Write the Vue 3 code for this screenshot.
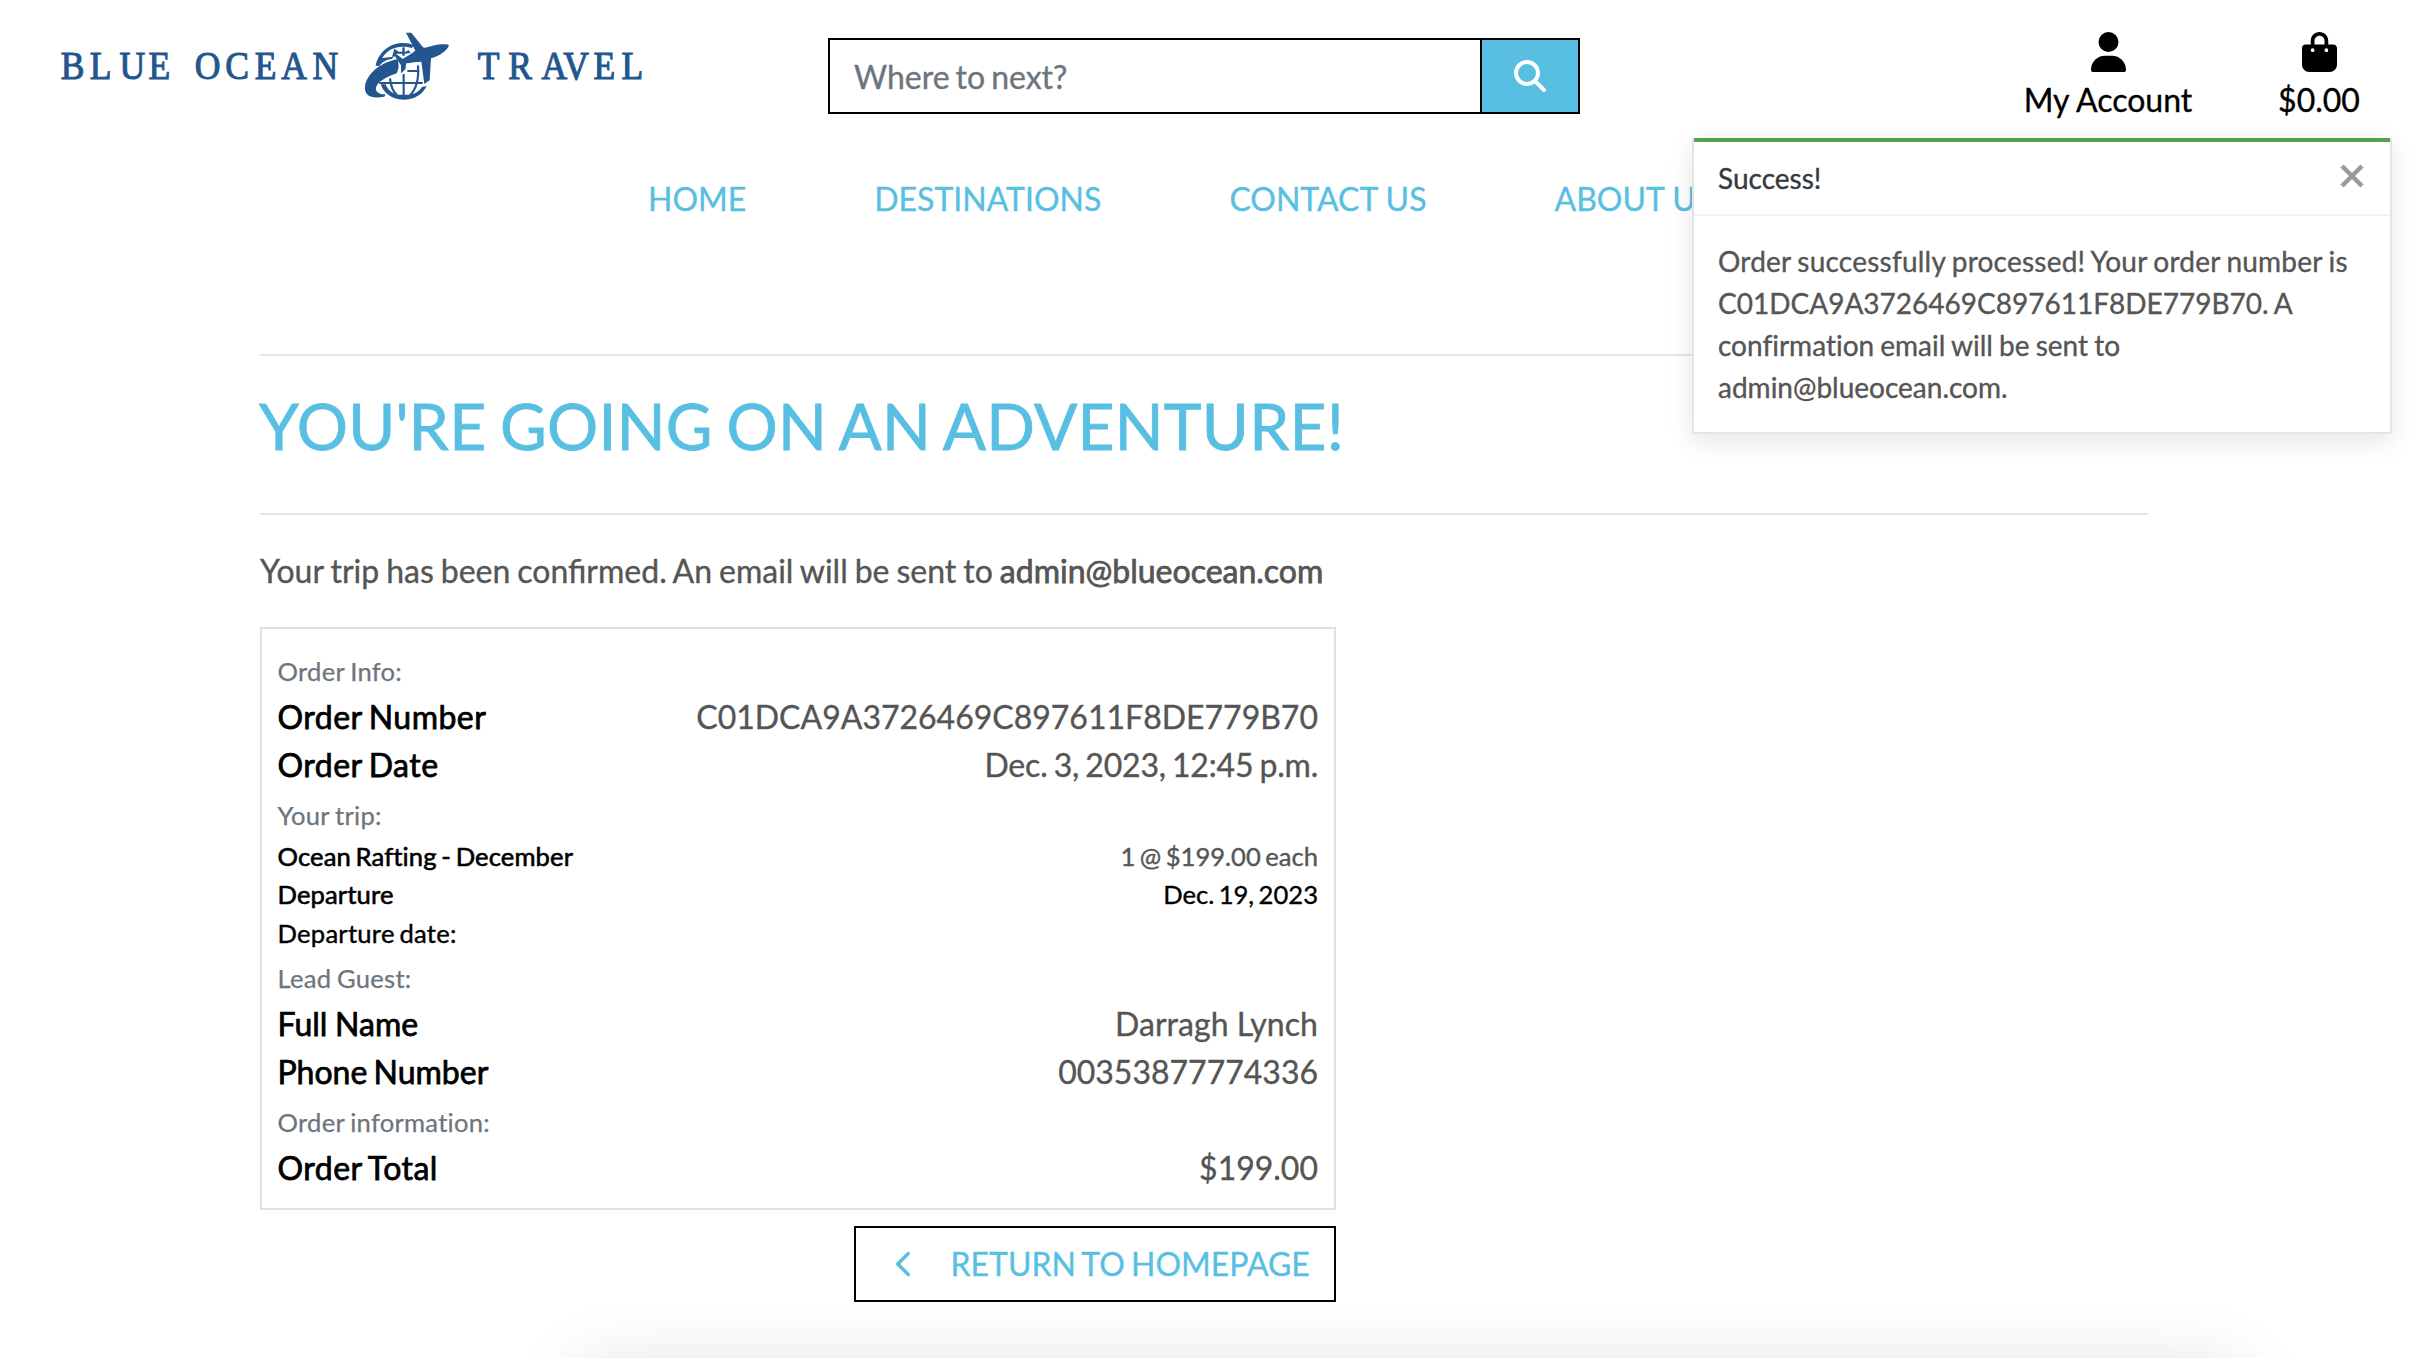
<script setup>
const nav = ['Home', 'Destinations', 'Contact Us', 'About Us']

const rows = [
  { kind: 'caption', label: 'Order Info:' },
  { kind: 'main wide', label: 'Order Number', value: 'C01DCA9A3726469C897611F8DE779B70' },
  { kind: 'main wide date', label: 'Order Date', value: 'Dec. 3, 2023, 12:45 p.m.' },
  { kind: 'caption', label: 'Your trip:' },
  { kind: 'small', label: 'Ocean Rafting - December', value: '1 @ $199.00 each' },
  { kind: 'small', label: 'Departure', value: 'Dec. 19, 2023', dark: true },
  { kind: 'small', label: 'Departure date:', plain: true },
  { kind: 'caption', label: 'Lead Guest:' },
  { kind: 'main name', label: 'Full Name', value: 'Darragh Lynch' },
  { kind: 'main', label: 'Phone Number', value: '00353877774336' },
  { kind: 'caption', label: 'Order information:' },
  { kind: 'main wide', label: 'Order Total', value: '$199.00' },
]

// Left edge of every wordmark letter
const letters = [
  ['B', 60.8], ['L', 89.8], ['U', 119.6], ['E', 148.6],
  ['O', 194.8], ['C', 225.4], ['E', 254.7], ['A', 281.2], ['N', 312.6],
  ['T', 477.8], ['R', 508.2], ['A', 541.4], ['V', 563.3], ['E', 593.5], ['L', 621.6],
]
const squeeze = 0.9
const wordmark = letters.map((l) => l[0]).join('')
const wordmarkX = letters.map((l) => (l[1] / squeeze).toFixed(1)).join(' ')
</script>

<template>
  <div class="page">
    <header class="top">
      <svg class="logo" viewBox="40 10 640 110">
        <text class="wordmark" y="79.3" :x="wordmarkX" transform="scale(0.9 1)">{{ wordmark }}</text>
        <g transform="translate(350 20) scale(0.33333)" fill="#23568f">
          <path d="M77 137C84 99 118 68 160 69C172 69 182 71 190 76L186 84C176 81 168 80 158 80C128 80 107 95 97 114L130 110L126 117C108 118 98 126 88 138Z" />
          <path d="M133 86L146 95L157 95V82H164V96L176 91L182 99L164 101V107H157V101L141 101L137 109L126 111Z" />
          <path d="M143 118C92 126 50 162 45 199C42 229 66 237 103 230L107 223C84 224 70 211 82 194C96 177 119 168 140 160C146 148 148 136 143 118Z" />
          <path d="M168 38H184L219 82C228 86 242 76 262 74C278 72 294 72 297 76C292 92 270 108 243 115L239 181L223 192L214 125C198 125 184 128 169 130L166 148L153 160V136L134 107L142 104L158 117C172 108 188 99 196 92Z" />
          <path d="M92 193C102 222 128 239 160 239C192 239 218 224 230 198L216 201C206 216 192 223 176 224H144C126 220 113 210 107 193Z" />
          <g fill="none" stroke="#23568f" stroke-width="6.5">
            <path d="M88 189H218M172 153H208M161 162V226M120 175C122 198 129 214 141 226M204 136C207 176 198 208 180 226" />
          </g>
        </g>
      </svg>

      <form class="search" @submit.prevent>
        <input type="text" placeholder="Where to next?" />
        <button type="submit" aria-label="Search">
          <svg viewBox="0 0 512 512" width="32" height="32"><path fill="#fff" d="M416 208c0 45.900-14.900 88.300-40 122.700L502.600 457.400c12.500 12.500 12.500 32.800 0 45.300s-32.800 12.500-45.300 0L330.700 376c-34.400 25.200-76.800 40-122.700 40C93.100 416 0 322.900 0 208S93.100 0 208 0S416 93.100 416 208zM208 352a144 144 0 1 0 0-288 144 144 0 1 0 0 288z" /></svg>
        </button>
      </form>

      <div class="account">
        <a class="tool user">
          <svg viewBox="0 0 448 512" width="35" height="40"><path d="M224 256A128 128 0 1 0 224 0a128 128 0 1 0 0 256zm-45.700 48C79.800 304 0 383.800 0 482.300C0 498.700 13.300 512 29.700 512H418.300c16.400 0 29.700-13.300 29.700-29.700C448 383.800 368.200 304 269.700 304H178.300z" /></svg>
          <span>My Account</span>
        </a>
        <a class="tool bag">
          <svg viewBox="0 0 448 512" width="35" height="40"><path d="M160 112c0-35.300 28.700-64 64-64s64 28.700 64 64v48H160V112zm-48 48H48c-26.500 0-48 21.500-48 48V416c0 53 43 96 96 96H352c53 0 96-43 96-96V208c0-26.500-21.500-48-48-48H336V112C336 50.100 285.900 0 224 0S112 50.100 112 112v48zm24 48a24 24 0 1 1 0 48 24 24 0 1 1 0-48zm152 24a24 24 0 1 1 48 0 24 24 0 1 1-48 0z" /></svg>
          <span>$0.00</span>
        </a>
      </div>
    </header>

    <nav class="menu">
      <a v-for="item in nav" :key="item">{{ item }}</a>
    </nav>

    <main class="content">
      <hr />
      <h2>You're going on an adventure!</h2>
      <hr />
      <p class="lead">Your trip has been confirmed. An email will be sent to <strong>admin@blueocean.com</strong></p>

      <section class="order">
        <div v-for="row in rows" :key="row.label" class="row" :class="row.kind">
          <span class="label" :class="{ plain: row.plain }">{{ row.label }}</span>
          <span v-if="row.value" class="value" :class="{ dark: row.dark }">{{ row.value }}</span>
        </div>
      </section>

      <a class="home">
        <svg viewBox="0 0 320 512" width="17.5" height="28"><path fill="currentColor" d="M9.400 233.400c-12.500 12.500-12.500 32.800 0 45.300l192 192c12.500 12.500 32.800 12.500 45.300 0s12.500-32.800 0-45.300L77.300 256 246.600 86.600c12.500-12.500 12.500-32.800 0-45.300s-32.800-12.500-45.300 0l-192 192z" /></svg>
        <span>Return to homepage</span>
      </a>
    </main>

    <aside class="toast">
      <div class="toast-head">
        <span>Success!</span>
        <svg width="24" height="24" viewBox="0 0 24 24"><path d="M2 2L22 22M22 2L2 22" stroke="#999b9d" stroke-width="4.5" /></svg>
      </div>
      <div class="toast-body">
        <p class="first">Order successfully processed! Your order number is</p>
        <p>C01DCA9A3726469C897611F8DE779B70. A confirmation email will be sent to admin@blueocean.com.</p>
      </div>
    </aside>

    <div class="footer-shade"></div>
  </div>
</template>

<style>
body {
  margin: 0;
  background: #fff;
}
</style>

<style scoped>
.page {
  position: relative;
  width: 2414px;
  height: 1358px;
  overflow: hidden;
  box-sizing: border-box;
  font-family: Lato, "Liberation Sans", sans-serif;
  font-size: 32px;
  line-height: 48px;
  color: #555;
  -webkit-text-stroke: 0.35px;
}

.page * {
  box-sizing: border-box;
}

.page svg {
  display: block;
}

.top {
  display: flex;
  align-items: flex-start;
  height: 174.5px;
  padding-left: 40px;
}

.logo {
  width: 640px;
  height: 110px;
  margin-top: 10px;
}

.wordmark {
  font-family: "Liberation Serif", serif;
  font-size: 39.5px;
  fill: #23568f;
  stroke: #23568f;
  stroke-width: 1.1px;
}

.search {
  display: flex;
  width: 752px;
  height: 76px;
  margin: 38px 0 0 148px;
  border: 2px solid #000;
}

.search input {
  flex: 1;
  min-width: 0;
  padding: 2px 24px 0;
  border: 0;
  border-right: 2px solid #000;
  outline: 0;
  font: inherit;
  word-spacing: -2.2px;
  background: #fff;
}

.search input::placeholder {
  color: #6c757d;
  opacity: 1;
}

.search button {
  display: flex;
  align-items: center;
  justify-content: center;
  width: 96px;
  padding: 0;
  border: 0;
  background: #59bfe2;
}

.account {
  display: flex;
  margin: 32px 0 0 443.5px;
  gap: 86.5px;
  color: #000;
}

.tool {
  display: flex;
  flex-direction: column;
  align-items: center;
  gap: 4px;
  white-space: nowrap;
}

.user {
  width: 169px;
}

.bag {
  width: 80px;
}

.menu {
  display: flex;
  gap: 128px;
  height: 179.5px;
  padding-left: 648px;
  color: #59bfe2;
  text-transform: uppercase;
  white-space: nowrap;
}

.content {
  width: 1888px;
  margin-left: 260px;
}

hr {
  height: 2px;
  margin: 0;
  border: 0;
  background: #e5e5e5;
}

h2 {
  height: 157px;
  margin: 0;
  padding-top: 31.5px;
  font-size: 64px;
  font-weight: 400;
  line-height: 76.8px;
  letter-spacing: 0.25px;
  word-spacing: -3px;
  text-indent: -1px;
  color: #59bfe2;
  text-transform: uppercase;
  -webkit-text-stroke: 0.8px;
}

.lead {
  height: 80px;
  margin: 32px 0 0;
  word-spacing: -1.2px;
}

strong {
  font-weight: 400;
  -webkit-text-stroke: 0.75px;
}

.order {
  width: 1076px;
  padding: 16px 16px 16px 15.5px;
  border: 2px solid #dee2e6;
}

.row {
  display: flex;
  justify-content: space-between;
  height: 48px;
}

.label {
  color: #000;
  word-spacing: -2px;
  -webkit-text-stroke: 0.75px;
}

.wide .label {
  letter-spacing: 0.48px;
}

.name .label {
  word-spacing: -0.5px;
}

.label.plain {
  -webkit-text-stroke: 0.35px;
}

.date .value {
  letter-spacing: -0.2px;
  word-spacing: -1.8px;
}

.name .value {
  letter-spacing: 0.05px;
}

.caption .label {
  padding-top: 2px;
  font-size: 25.6px;
  font-variant-ligatures: none;
  letter-spacing: 0.25px;
  word-spacing: -1px;
  color: #6c757d;
  -webkit-text-stroke: 0.25px;
}

.small {
  height: 38.4px;
  font-size: 25.6px;
  line-height: 38.4px;
}

.small .label {
  letter-spacing: 0.12px;
  -webkit-text-stroke-width: 0.6px;
}

.small .label.plain {
  letter-spacing: 0.25px;
  -webkit-text-stroke-width: 0.4px;
}

.small .value {
  word-spacing: -2.1px;
}

.dark {
  color: #000;
}

.home {
  display: flex;
  align-items: center;
  width: 482px;
  height: 76px;
  margin: 16px 0 0 594px;
  padding-left: 40px;
  border: 2px solid #000;
  color: #59bfe2;
  text-transform: uppercase;
  white-space: nowrap;
}

.home span {
  margin-left: 37px;
  word-spacing: -1.9px;
}

.toast {
  position: absolute;
  top: 138px;
  left: 1692px;
  width: 700px;
  height: 296px;
  border: 2px solid #e4e4e4;
  border-top: 0;
  background: #fff;
  box-shadow: 0 8px 24px rgba(0, 0, 0, 0.1);
  font-size: 28px;
  line-height: 42px;
}

.toast-head {
  display: flex;
  justify-content: space-between;
  height: 78px;
  padding: 15px 26px 0 24px;
  border-top: 4px solid #51a351;
  border-bottom: 2px solid #f2f2f2;
  color: #343a40;
}

.toast-head svg {
  margin-top: 7px;
}

.toast-body {
  padding: 24px;
}

.toast p {
  margin: 0;
  font-variant-ligatures: none;
  word-spacing: -1px;
}

.toast .first {
  letter-spacing: 0.22px;
}

.footer-shade {
  position: absolute;
  top: 1378px;
  left: 583px;
  width: 1652px;
  height: 300px;
  box-shadow: 0 0 72px rgba(0, 0, 0, 0.19);
}
</style>
